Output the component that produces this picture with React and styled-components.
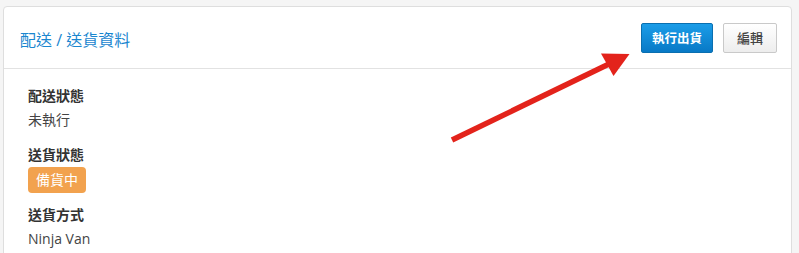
import React from "react";
import styled, { createGlobalStyle } from "styled-components";

const Global = createGlobalStyle`
  html, body { margin: 0; padding: 0; }
  body {
    background: #f5f5f5;
    font-family: "Open Sans", "Noto Sans CJK TC", sans-serif;
    overflow: hidden;
  }
`;

const Page = styled.div`
  position: relative;
  width: 799px;
  height: 253px;
  overflow: hidden;
  padding: 6px 7px 0 3px;
  box-sizing: border-box;
`;

const Card = styled.div`
  background: #fff;
  border: 1px solid #dedede;
  border-radius: 4px;
  height: 300px;
`;

const Header = styled.div`
  height: 61px;
  border-bottom: 1px solid #e2e2e2;
  display: flex;
  align-items: center;
  justify-content: space-between;
  padding: 0 14px 0 16px;
`;

const Title = styled.h3`
  margin: 2px 0 0;
  font-size: 16px;
  font-weight: 400;
  color: #1a86cf;
  letter-spacing: 0;
`;

const Actions = styled.div`
  display: flex;
  gap: 10px;
`;

const Button = styled.button`
  height: 30px;
  box-sizing: border-box;
  padding: 0 ${(p) => (p.$primary ? "10px" : "13px")};
  border-radius: 2px;
  font-family: "Open Sans", "Noto Sans CJK TC", sans-serif;
  font-size: ${(p) => (p.$primary ? "12.5px" : "13px")};
  font-weight: ${(p) => (p.$primary ? 700 : 500)};
  cursor: pointer;
  color: ${(p) => (p.$primary ? "#fff" : "#444")};
  border: 1px solid ${(p) => (p.$primary ? "#0a6fb0" : "#c9c9c9")};
  background: ${(p) =>
    p.$primary
      ? "linear-gradient(#1b9de8, #0879c6)"
      : "linear-gradient(#ffffff, #ededed)"};
`;

const Body = styled.div`
  padding: 15px 24px;
  font-size: 14px;
  line-height: 24px;
`;

const Group = styled.div`
  margin-bottom: 11px;
`;

const Label = styled.div`
  font-weight: 700;
  color: #333;
`;

const Value = styled.div`
  color: #444;
`;

const Badge = styled.div`
  width: fit-content;
  height: 26px;
  line-height: 26px;
  padding: 0 8px;
  margin-bottom: -1px;
  border-radius: 4px;
  background: #f2a24e;
  color: #fff;
  font-size: 14px;
`;

const Overlay = styled.svg`
  position: absolute;
  left: 0;
  top: 0;
  pointer-events: none;
`;

export default function App() {
  return (
    <Page>
      <Global />
      <Card>
        <Header>
          <Title>配送 / 送貨資料</Title>
          <Actions>
            <Button $primary>執行出貨</Button>
            <Button>編輯</Button>
          </Actions>
        </Header>
        <Body>
          <Group>
            <Label>配送狀態</Label>
            <Value>未執行</Value>
          </Group>
          <Group>
            <Label>送貨狀態</Label>
            <Badge>備貨中</Badge>
          </Group>
          <Group>
            <Label>送貨方式</Label>
            <Value>Ninja Van</Value>
          </Group>
        </Body>
      </Card>
      <Overlay width="799" height="253" viewBox="0 0 799 253">
        <line
          x1="452"
          y1="140"
          x2="610"
          y2="63.5"
          stroke="#e3231b"
          strokeWidth="5.5"
          strokeLinecap="butt"
        />
        <polygon points="601,53.5 629.5,54 613.5,76" fill="#e3231b" />
      </Overlay>
    </Page>
  );
}
